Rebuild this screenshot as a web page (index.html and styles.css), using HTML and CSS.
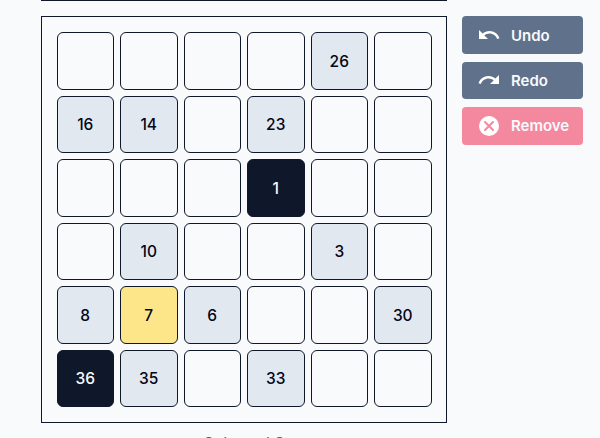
FILE: index.html
```html
<!DOCTYPE html>
<html lang="en">
<head>
    <meta charset="UTF-8">
    <meta name="viewport" content="width=device-width, initial-scale=1.0">
    <title>Number Grid</title>
    <link rel="stylesheet" href="styles.css">
</head>
<body>

    <div class="top-bar"></div>

    <div class="game">
        <div class="left-col">
            <!-- Board -->
            <div class="board">
                <div class="cell"></div>
                <div class="cell"></div>
                <div class="cell"></div>
                <div class="cell"></div>
                <div class="cell given">26</div>
                <div class="cell"></div>

                <div class="cell given">16</div>
                <div class="cell given">14</div>
                <div class="cell"></div>
                <div class="cell given">23</div>
                <div class="cell"></div>
                <div class="cell"></div>

                <div class="cell"></div>
                <div class="cell"></div>
                <div class="cell"></div>
                <div class="cell end">1</div>
                <div class="cell"></div>
                <div class="cell"></div>

                <div class="cell"></div>
                <div class="cell given">10</div>
                <div class="cell"></div>
                <div class="cell"></div>
                <div class="cell given">3</div>
                <div class="cell"></div>

                <div class="cell given">8</div>
                <div class="cell active">7</div>
                <div class="cell given">6</div>
                <div class="cell"></div>
                <div class="cell"></div>
                <div class="cell given">30</div>

                <div class="cell end">36</div>
                <div class="cell given">35</div>
                <div class="cell"></div>
                <div class="cell given">33</div>
                <div class="cell"></div>
                <div class="cell"></div>
            </div>
            <a class="board-link" href="#">Selected S</a>
        </div>

        <!-- Actions -->
        <div class="actions">
            <button class="btn">
                <svg class="btn-icon" viewBox="0 0 24 24"><path d="M12.5 8c-2.65 0-5.05 1-6.9 2.6L2 7v9h9l-3.62-3.62c1.39-1.16 3.16-1.88 5.12-1.88 3.54 0 6.55 2.31 7.6 5.5l2.37-.78C21.08 11.03 17.15 8 12.5 8z"/></svg>
                Undo
            </button>
            <button class="btn">
                <svg class="btn-icon" viewBox="0 0 24 24"><path d="M18.4 10.6C16.55 9 14.15 8 11.5 8c-4.65 0-8.58 3.03-9.96 7.22L3.9 16c1.05-3.19 4.05-5.5 7.6-5.5 1.95 0 3.73.72 5.12 1.88L13 16h9V7l-3.6 3.6z"/></svg>
                Redo
            </button>
            <button class="btn btn-remove">
                <svg class="btn-icon" viewBox="0 0 24 24"><circle cx="12" cy="12" r="10" fill="#fff"/><path d="M8 8l8 8M16 8l-8 8" stroke="#f4889f" stroke-width="2" stroke-linecap="round" fill="none"/></svg>
                Remove
            </button>
        </div>
    </div>

</body>
</html>
```

FILE: styles.css
```css
html, body {
    height: 100%;
    overflow: hidden;
}

body {
    font-family: 'Inter', sans-serif;
    background-color: #f8fafc;
    color: #020617;
    margin: 0;
}

.top-bar {
    width: 406px;
    height: 1px;
    margin-left: 41px;
    background-color: #0f172a;
}

.game {
    display: flex;
    align-items: flex-start;
    gap: 15px;
    padding: 15px 0 0 41px;
}

.left-col {
    display: flex;
    flex-direction: column;
    align-items: center;
}

/* Board */
.board {
    display: grid;
    grid-template-columns: repeat(6, 57.5px);
    grid-auto-rows: 57.5px;
    gap: 6px;
    width: 406px;
    box-sizing: border-box;
    padding: 15px 14.5px;
    border: 1px solid #0f172a;
}

.cell {
    display: flex;
    align-items: center;
    justify-content: center;
    box-sizing: border-box;
    padding-top: 1px;
    background-color: #f8fafc;
    border: 1px solid #0f172a;
    border-radius: 6px;
    font-size: 15.5px;
    font-weight: 500;
}

.given {
    background-color: #e2e8f0;
}

.active {
    background-color: #fde68a;
}

.end {
    background-color: #0f172a;
    color: #f8fafc;
}

.board-link {
    margin-top: 9.5px;
    color: #2563eb;
    font-size: 16px;
    text-decoration: none;
}

/* Buttons */
.actions {
    display: flex;
    flex-direction: column;
    gap: 8px;
    width: 121px;
    margin-top: 0.4px;
}

.btn {
    display: flex;
    align-items: center;
    gap: 10px;
    height: 37.4px;
    padding: 0 0 0 15px;
    background-color: #5f718b;
    color: #f8fafc;
    border: none;
    border-radius: 4px;
    font-family: inherit;
    font-size: 15px;
    font-weight: 600;
}

.btn-remove {
    background-color: #f4889f;
}

.btn-icon {
    flex-shrink: 0;
    width: 24px;
    height: 24px;
    fill: #fff;
}
```
